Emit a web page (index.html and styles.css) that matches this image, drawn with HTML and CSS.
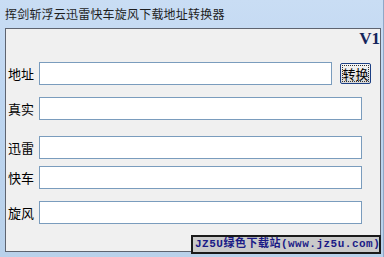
FILE: index.html
```html
<!DOCTYPE html>
<html lang="zh-CN">
<head>
  <meta charset="UTF-8">
  <title>挥剑斩浮云迅雷快车旋风下载地址转换器</title>
  <link rel="stylesheet" href="styles.css">
</head>
<body>
  <div class="window">
    <div class="title-bar">挥剑斩浮云迅雷快车旋风下载地址转换器</div>

    <div class="client">
      <div class="version">V1</div>

      <!-- 地址输入 -->
      <div class="row row-addr">
        <label>地址</label>
        <input type="text" class="field field-short">
        <button class="convert">转换</button>
      </div>

      <div class="row row-real">
        <label>真实</label>
        <input type="text" class="field">
      </div>

      <div class="row row-thunder">
        <label>迅雷</label>
        <input type="text" class="field">
      </div>

      <div class="row row-flashget">
        <label>快车</label>
        <input type="text" class="field">
      </div>

      <div class="row row-qq">
        <label>旋风</label>
        <input type="text" class="field">
      </div>
    </div>

    <div class="banner">JZ5U绿色下载站(www.jz5u.com)</div>
  </div>
</body>
</html>
```

FILE: styles.css
```css
body {
  margin: 0;
  width: 384px;
  height: 257px;
  overflow: hidden;
  font-family: "Noto Sans CJK SC", sans-serif;
}
.window {
  position: relative;
  height: 257px;
  background: linear-gradient(to bottom, #c9ddf4 0%, #bdd5f0 40%, #b9d1ea 100%);
  box-sizing: border-box;
  border-right: 1px solid #8fa8c8;
}
.title-bar {
  height: 28px;
  line-height: 27px;
  padding-left: 5px;
  font-size: 12px;
  letter-spacing: 0.2px;
  color: #1e1e1e;
}
.client {
  margin: 0 2px 0 5px;
  height: 224px;
  box-sizing: border-box;
  border: 1px solid #5e6470;
  background: #f0f0f0;
  display: flex;
  flex-direction: column;
  padding-left: 2px;
}
.version {
  align-self: flex-end;
  font-family: "Liberation Serif", serif;
  font-weight: bold;
  font-size: 17px;
  line-height: 16px;
  color: #14245c;
  margin-top: 2px;
}
.row {
  display: flex;
  align-items: center;
}
.row label {
  width: 31px;
  font-size: 13px;
  color: #000;
}
.row-addr { margin-top: 15px; }
.row-real { margin-top: 12px; }
.row-thunder { margin-top: 16px; }
.row-flashget { margin-top: 7px; }
.row-qq { margin-top: 12px; }
.field {
  width: 323px;
  height: 23px;
  box-sizing: border-box;
  border: 1px solid #7a9cbd;
  background: #fff;
  margin: 0;
  padding: 0 3px;
}
.field-short {
  width: 293px;
}
.convert {
  margin-left: 8px;
  width: 31px;
  height: 21px;
  padding: 0;
  font-family: "Noto Sans CJK SC", sans-serif;
  font-size: 13px;
  line-height: 17px;
  color: #000;
  border: 1px solid #1c3f84;
  border-radius: 2px;
  background: linear-gradient(to bottom, #f6f6f6 0%, #e6e6e6 50%, #d8d8d8 100%);
  outline: 1px dotted #333;
  outline-offset: -3px;
}
.banner {
  position: absolute;
  left: 191px;
  top: 235px;
  width: 190px;
  height: 19px;
  box-sizing: border-box;
  border: 2px solid #1a1a1a;
  background: #cacaca;
  color: #1a1a86;
  font-family: "Liberation Mono", "Noto Sans CJK SC", monospace;
  font-weight: bold;
  font-size: 11px;
  letter-spacing: 0.5px;
  line-height: 15px;
  padding-left: 2px;
  white-space: nowrap;
}
```
